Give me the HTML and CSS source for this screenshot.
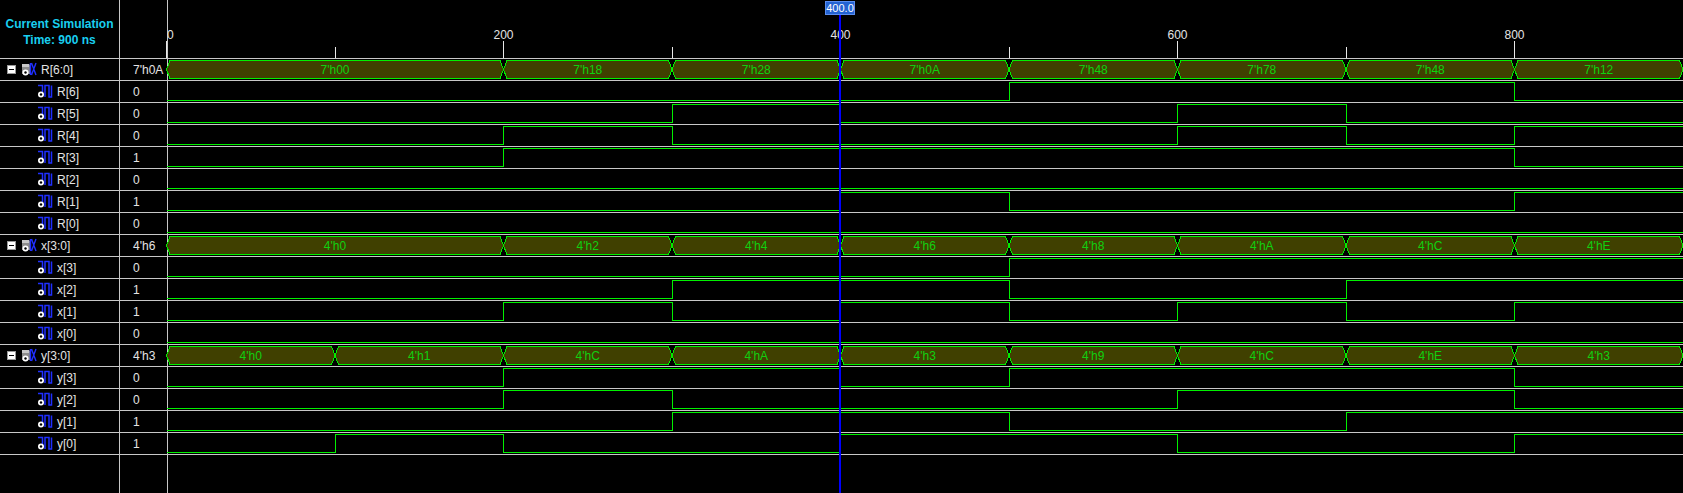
FILE: index.html
```html
<!DOCTYPE html>
<html lang="en">
<head>
    <meta charset="UTF-8">
    <title>Simulation Waveform</title>
    <link rel="stylesheet" href="styles.css">
</head>
<body>
    <div class="viewer">
        <div class="row header">
            <div class="name-col title">Current Simulation<br>Time: 900 ns</div>
            <div class="value-col"></div>
            <div class="wave-col"><svg id="ruler" class="ruler" height="58"></svg></div>
        </div>
        <div id="rows"></div>
        <div class="row filler">
            <div class="name-col"></div>
            <div class="value-col"></div>
            <div class="wave-col"></div>
        </div>
        <div class="cursor"><span class="cursor-label">400.0</span></div>
    </div>

    <script>
        const PX = 1.685, OFF = -1.5, END = 900, CURSOR = 400;
        const X = t => t * PX + OFF;
        const TOP = 1.5, BOT = 19.5, MID = 10.5, D = 3.5;

        const buses = [
            { name: 'R', w: 7, pre: "7'h", segs: [[0,'00'],[200,'18'],[300,'28'],[400,'0A'],[500,'48'],[600,'78'],[700,'48'],[800,'12']] },
            { name: 'x', w: 4, pre: "4'h", segs: [[0,'0'],[200,'2'],[300,'4'],[400,'6'],[500,'8'],[600,'A'],[700,'C'],[800,'E']] },
            { name: 'y', w: 4, pre: "4'h", segs: [[0,'0'],[100,'1'],[200,'C'],[300,'A'],[400,'3'],[500,'9'],[600,'C'],[700,'E'],[800,'3']] }
        ];

        const boxIcon = '<svg class="expand" width="9" height="9"><rect x="0.5" y="0.5" width="8" height="8" fill="#fff" stroke="#999"/><path d="M2 4.5h5" stroke="#000"/></svg>';
        const busIcon = '<svg class="icon" width="16" height="15"><path d="M1 2h7l2 2v8H1z" fill="#8c8c8c"/><path d="M1 2h7v3H1z" fill="#c8c8c8"/>'
            + '<path d="M9.5 1v12M10.5 1l4.5 12M15 1l-4.5 12" stroke="#1f2fff" stroke-width="1.4" fill="none"/>'
            + '<circle cx="4.5" cy="10.5" r="3" fill="#fff"/><circle cx="4.5" cy="10.5" r="1.2" fill="#000"/></svg>';
        const bitIcon = '<svg class="icon" width="16" height="15"><path d="M1 1.5h4.5v7M8 13V1.5h4v11.5h2.5V1.5" stroke="#1f2fff" stroke-width="1.5" fill="none"/>'
            + '<circle cx="4" cy="10.5" r="3" fill="#fff"/><circle cx="4" cy="10.5" r="1.2" fill="#000"/></svg>';

        function segEnd(segs, i) {
            return i + 1 < segs.length ? segs[i + 1][0] : END;
        }

        function valueAt(segs, t) {
            let v = segs[0][1];
            segs.forEach(s => { if (s[0] <= t) v = s[1]; });
            return v;
        }

        function busWave(bus) {
            let out = '';
            bus.segs.forEach((s, i) => {
                const a = X(s[0]), b = X(segEnd(bus.segs, i));
                out += `<polygon points="${a},${MID} ${a + D},${TOP} ${b - D},${TOP} ${b},${MID} ${b - D},${BOT} ${a + D},${BOT}" class="bus"/>`;
                out += `<text x="${(a + b) / 2}" y="15" class="bus-text">${bus.pre}${s[1]}</text>`;
            });
            return out;
        }

        function bitWave(bus, bit) {
            const lvl = v => (parseInt(v, 16) >> bit) & 1 ? TOP : BOT;
            let y = lvl(bus.segs[0][1]);
            let pts = `${X(0)},${y}`;
            bus.segs.forEach((s, i) => {
                if (i === 0) return;
                const ny = lvl(s[1]);
                if (ny !== y) {
                    pts += ` ${X(s[0])},${y} ${X(s[0])},${ny}`;
                    y = ny;
                }
            });
            pts += ` ${X(END)},${y}`;
            return `<polyline points="${pts}" class="bit"/>`;
        }

        function row(nameHtml, cls, value, wave) {
            return `<div class="row">
                <div class="name-col ${cls}">${nameHtml}</div>
                <div class="value-col">${value}</div>
                <div class="wave-col"><svg class="wave" height="21">${wave}</svg></div>
            </div>`;
        }

        let html = '';
        buses.forEach(bus => {
            const v = valueAt(bus.segs, CURSOR);
            html += row(`${boxIcon}${busIcon}<span>${bus.name}[${bus.w - 1}:0]</span>`, 'bus-name', bus.pre + v, busWave(bus));
            for (let bit = bus.w - 1; bit >= 0; bit--) {
                const b = (parseInt(v, 16) >> bit) & 1;
                html += row(`${bitIcon}<span>${bus.name}[${bit}]</span>`, 'bit-name', b, bitWave(bus, bit));
            }
        });
        document.getElementById('rows').innerHTML = html;

        // линейка времени
        let ruler = '';
        for (let t = 0; t < END; t += 100) {
            const x = X(t);
            if (t % 200 === 0) {
                ruler += `<line x1="${x}" y1="41" x2="${x}" y2="58" class="tick"/>`;
                ruler += `<text x="${t === 0 ? x + 0.5 : x}" y="39" class="tick-label" text-anchor="${t === 0 ? 'start' : 'middle'}">${t}</text>`;
            } else {
                ruler += `<line x1="${x}" y1="47" x2="${x}" y2="58" class="tick"/>`;
            }
        }
        document.getElementById('ruler').innerHTML = ruler;
    </script>
</body>
</html>
```

FILE: styles.css
```css
html, body {
    margin: 0;
    padding: 0;
    background: #000;
    height: 100%;
    overflow: hidden;
}
.viewer {
    position: relative;
    display: flex;
    flex-direction: column;
    height: 100%;
    font-family: "Liberation Sans", Arial, sans-serif;
    font-size: 12px;
    color: #e4e4e4;
}
.row {
    display: flex;
    box-sizing: border-box;
    height: 22px;
    border-bottom: 1px solid #c8c8c8;
}
.header {
    height: 59px;
}
.filler {
    flex: 1;
    border-bottom: none;
}
.name-col {
    box-sizing: border-box;
    width: 120px;
    flex: none;
    border-right: 1px solid #c8c8c8;
    display: flex;
    align-items: center;
    white-space: nowrap;
}
.value-col {
    box-sizing: border-box;
    width: 48px;
    flex: none;
    border-right: 1px solid #c8c8c8;
    display: flex;
    align-items: center;
    padding-left: 13px;
}
.wave-col {
    flex: 1;
    position: relative;
}
.title {
    display: block;
    text-align: center;
    color: #19cff0;
    font-weight: bold;
    line-height: 16px;
    padding-top: 16px;
}
.bus-name {
    padding-left: 7px;
}
.bit-name {
    padding-left: 37px;
}
.expand {
    margin-right: 5px;
}
.icon {
    margin-right: 4px;
}
.wave, .ruler {
    display: block;
    width: 100%;
    overflow: visible;
}
.wave .bus {
    fill: #404000;
    stroke: #00f000;
    stroke-width: 1;
    shape-rendering: crispEdges;
}
.wave .bus-text {
    fill: #10d010;
    font-family: "Liberation Sans", Arial, sans-serif;
    font-size: 12px;
    text-anchor: middle;
}
.wave .bit {
    fill: none;
    stroke: #00f000;
    stroke-width: 1;
    shape-rendering: crispEdges;
}
.ruler .tick {
    stroke: #e8e8e8;
    stroke-width: 1;
    shape-rendering: crispEdges;
}
.ruler .tick-label {
    fill: #e4e4e4;
    font-family: "Liberation Sans", Arial, sans-serif;
    font-size: 12px;
}
.cursor {
    position: absolute;
    left: 839px;
    top: 15px;
    bottom: 0;
    width: 2px;
    background: #0000ff;
}
.cursor-label {
    position: absolute;
    left: -14px;
    top: -14px;
    width: 28px;
    height: 12px;
    background: #2463d2;
    border: 1px solid #5b8ef0;
    color: #fff;
    font-size: 11px;
    line-height: 12px;
    text-align: center;
}
```
